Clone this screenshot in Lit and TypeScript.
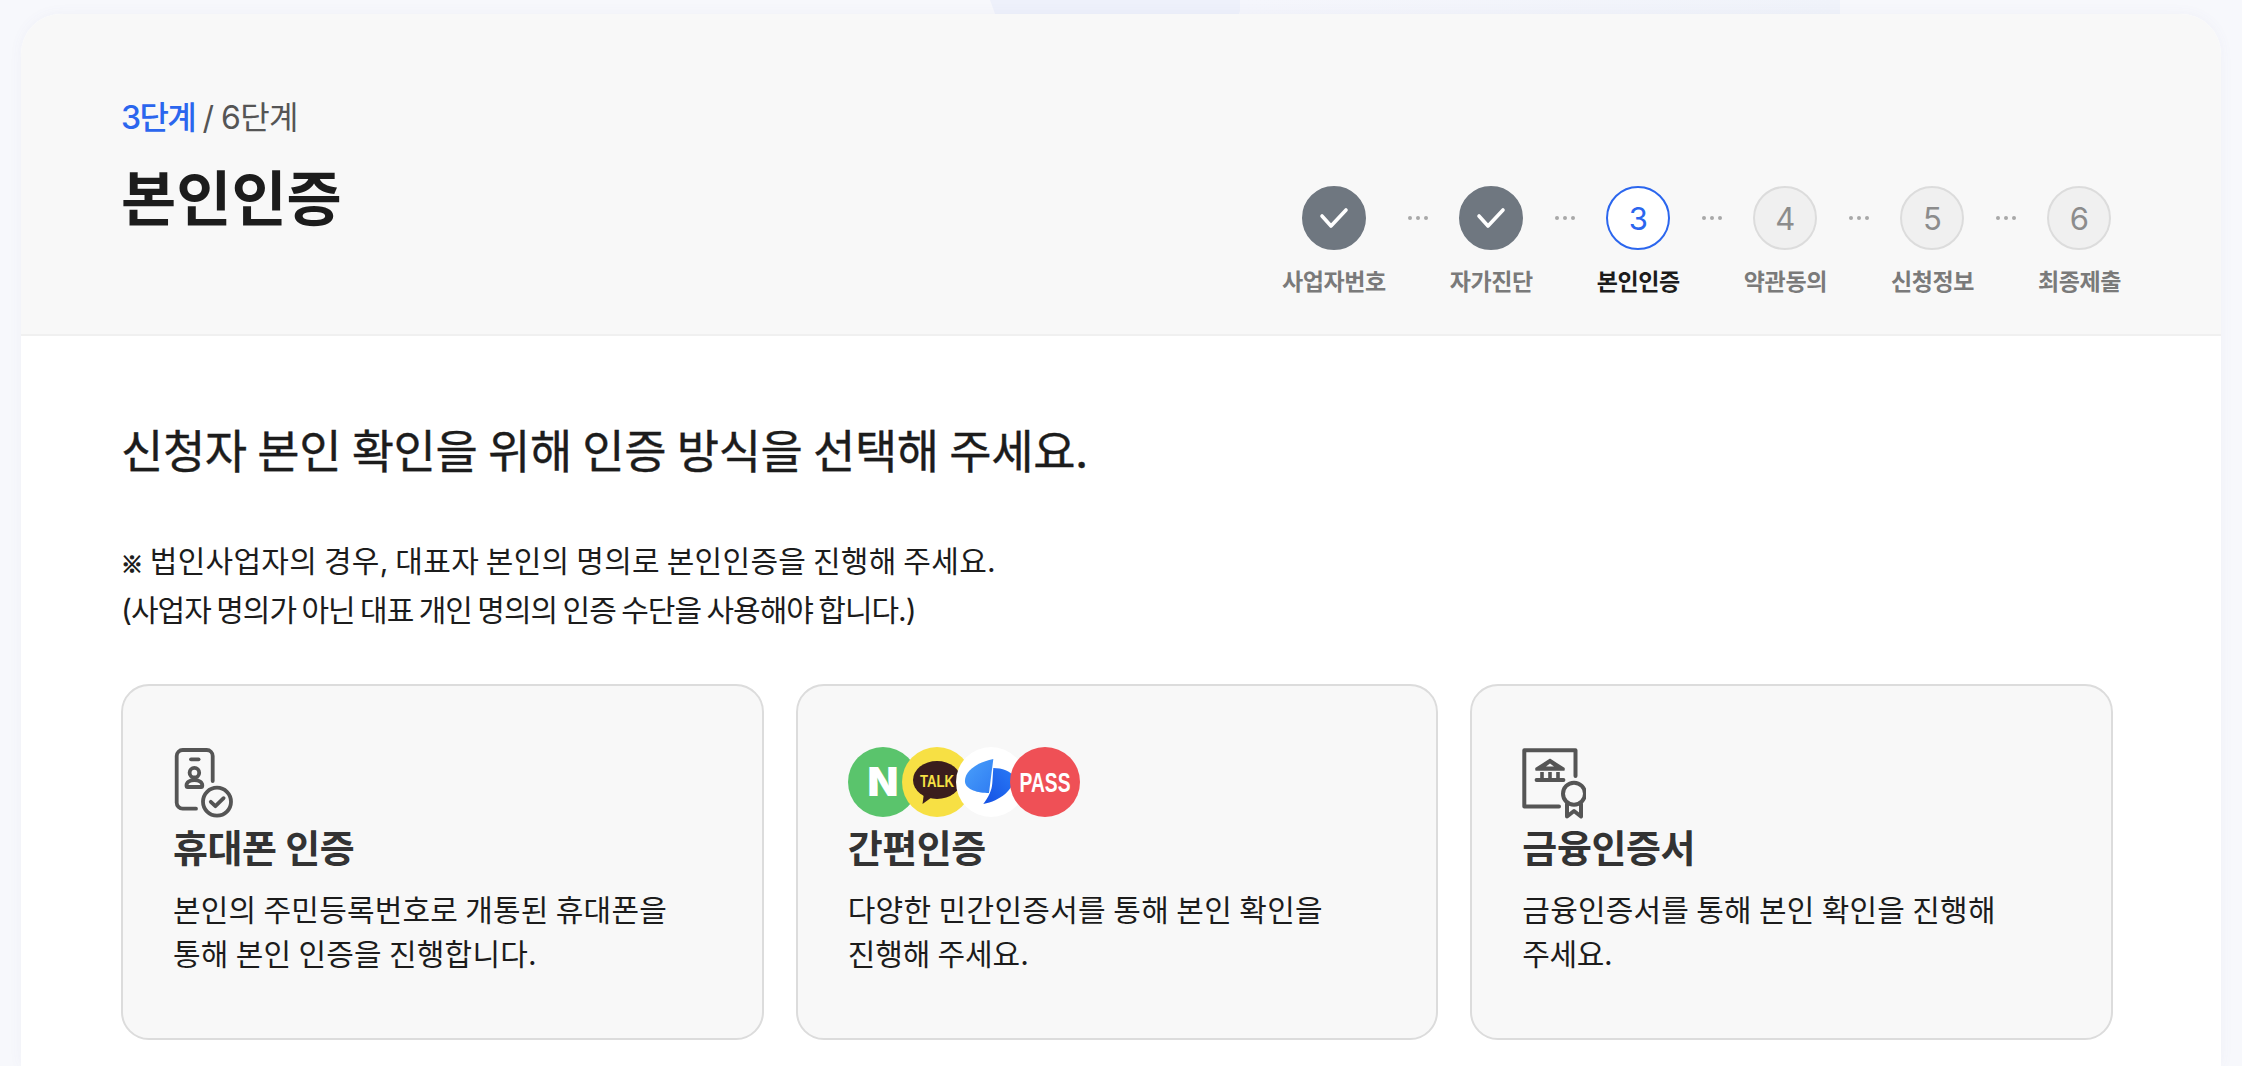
import { LitElement, html, css, svg } from "lit";
import { customElement } from "lit/decorators.js";

const STEPS = ["사업자번호", "자가진단", "본인인증", "약관동의", "신청정보", "최종제출"];
const CURRENT = 3;

const phoneIcon = svg`
  <svg class="icon" width="64" height="72" viewBox="0 0 64 72" fill="none" stroke="#555" stroke-width="3.8" stroke-linecap="round" stroke-linejoin="round">
    <path d="M39.7 34V9a6 6 0 0 0-6-6H9.700a6 6 0 0 0-6 6v46.700a6 6 0 0 0 6 6H23" />
    <path d="M18 12.300h7.600" />
    <circle cx="21.400" cy="25.700" r="4.800" />
    <path d="M14.700 40h13.400c1 0 1.200-.8 1.200-1.600 0-3.200-3.400-5.400-7.900-5.400s-7.900 2.200-7.900 5.400c0 .8.2 1.600 1.200 1.600z" />
    <circle cx="44" cy="54.700" r="14" />
    <path d="M37.800 54.800l4.600 4.400 8.200-8" />
  </svg>`;

const certIcon = svg`
  <svg class="icon" width="64" height="72" viewBox="0 0 64 72" fill="none" stroke="#555" stroke-width="4" stroke-linecap="round" stroke-linejoin="round">
    <path d="M53.500 29V3.300H2.300v56.200H37" />
    <path d="M28 12.500L14 21.400v1.600h28v-1.600z" fill="#555" stroke-width="1.500" />
    <path d="M28 16.600l-4 2.900h8z" fill="#f8f8f8" stroke="none" />
    <path d="M20 25v6M28 25v6M36 25v6" stroke-width="3.600" stroke-linecap="butt" />
    <path d="M14.500 33h27" stroke-width="3.800" />
    <circle cx="52" cy="46.700" r="11" />
    <path d="M45 57v12.500l7-5.500 7 5.500V57" />
  </svg>`;

const logos = html`
  <div class="logos">
    <svg width="70" height="70" viewBox="0 0 70 70">
      <circle cx="35" cy="35" r="35" fill="#5ac46c" />
      <text x="35" y="49" text-anchor="middle" class="logo-n">N</text>
    </svg>
    <svg width="70" height="70" viewBox="0 0 70 70">
      <circle cx="35" cy="35" r="35" fill="#f7e044" />
      <ellipse cx="35" cy="33" rx="24" ry="19" fill="#3a1d1d" />
      <path d="M22 46l-1.500 11 11-8z" fill="#3a1d1d" />
      <text x="35" y="39.500" text-anchor="middle" textLength="34" lengthAdjust="spacingAndGlyphs" class="logo-talk">TALK</text>
    </svg>
    <svg width="70" height="70" viewBox="0 0 70 70">
      <defs>
        <linearGradient id="leafA" x1="0" y1="0" x2="1" y2="1">
          <stop offset="0" stop-color="#4aa0fb" />
          <stop offset="1" stop-color="#2f7cf2" />
        </linearGradient>
        <linearGradient id="leafB" x1="1" y1="0" x2="0" y2="1">
          <stop offset="0" stop-color="#2a7bf6" />
          <stop offset="1" stop-color="#1450e4" />
        </linearGradient>
      </defs>
      <circle cx="35" cy="35" r="35" fill="#fff" />
      <path d="M37.300 12C18 16 8 26 9 35c1 8 13 11 24 11z" fill="url(#leafA)" />
      <path d="M37.300 21c9 0 17 3 21 9 0 12-14 24-31 27 5-7 8.500-13 9-21z" fill="url(#leafB)" />
    </svg>
    <svg width="70" height="70" viewBox="0 0 70 70">
      <circle cx="35" cy="35" r="35" fill="#ef5056" />
      <text x="35" y="45" text-anchor="middle" textLength="51" lengthAdjust="spacingAndGlyphs" class="logo-pass">PASS</text>
    </svg>
  </div>`;

const METHODS = [
  {
    icon: phoneIcon,
    title: "휴대폰 인증",
    lines: [
      { text: "본인의 주민등록번호로 개통된 휴대폰을", track: 0.2 },
      { text: "통해 본인 인증을 진행합니다.", track: 0.2 },
    ],
  },
  {
    icon: logos,
    title: "간편인증",
    lines: [
      { text: "다양한 민간인증서를 통해 본인 확인을", track: 0.3 },
      { text: "진행해 주세요.", track: 0 },
    ],
  },
  {
    icon: certIcon,
    title: "금융인증서",
    lines: [
      { text: "금융인증서를 통해 본인 확인을 진행해", track: 0.2 },
      { text: "주세요.", track: -0.4 },
    ],
  },
];

@customElement("app-root")
export class AppRoot extends LitElement {
  static styles = css`
    :host {
      display: block;
      height: 100vh;
      overflow: hidden;
      font-family: Inter, "Noto Sans CJK KR", "Noto Sans", sans-serif;
      color: #1c1c1c;
    }

    .page {
      position: relative;
      box-sizing: border-box;
      height: 100vh;
      padding: 14px 21px 0;
      background: #f7f8fc;
    }

    .blob {
      position: absolute;
      top: 0;
      height: 14px;
    }

    .blob.a {
      left: 990px;
      width: 254px;
      background: #eef1fb;
      clip-path: polygon(0 0, 100% 0, 98% 100%, 2% 100%);
    }

    .blob.b {
      left: 1240px;
      width: 600px;
      background: linear-gradient(90deg, #f5f6fc, #f0f3fa);
    }

    .panel {
      position: relative;
      height: 100%;
      background: #fff;
      border-radius: 40px 40px 0 0;
      box-shadow: 0 0 14px rgba(90, 100, 150, 0.05);
    }

    .head {
      box-sizing: border-box;
      height: 322px;
      padding: 0 100px;
      display: flex;
      justify-content: space-between;
      background: #f8f8f8;
      border-bottom: 2px solid #f0f0f0;
      border-radius: 40px 40px 0 0;
    }

    .count {
      margin: 82px 0 0;
      font-size: 32px;
      line-height: 44px;
      letter-spacing: -0.6px;
      word-spacing: -1px;
      color: #555;
    }

    .count b {
      font-weight: 500;
      letter-spacing: -1.6px;
      color: #2b66ee;
    }

    .title {
      margin: 16px 0 0;
      font-size: 60px;
      line-height: 86px;
      font-weight: 700;
    }

    .steps {
      display: flex;
      margin-top: 172px;
      align-self: flex-start;
    }

    .step {
      display: flex;
      flex-direction: column;
      align-items: center;
    }

    .circle {
      box-sizing: border-box;
      width: 64px;
      height: 64px;
      border-radius: 50%;
      display: flex;
      align-items: center;
      justify-content: center;
      font-size: 31px;
      background: #f0f0f0;
      border: 2px solid #dcdcdc;
      color: #8c8c8c;
    }

    .circle.done {
      background: #6f7780;
      border-color: #6f7780;
    }

    .circle.current {
      background: #fff;
      border-color: #2b66ee;
      color: #2b66ee;
    }

    .label {
      margin-top: 15px;
      font-size: 23px;
      line-height: 34px;
      font-weight: 700;
      letter-spacing: -0.4px;
      color: #7a7a7a;
    }

    .label.current {
      color: #1c1c1c;
    }

    .dots {
      width: 64px;
      height: 64px;
      display: flex;
      align-items: center;
      justify-content: center;
      gap: 4px;
    }

    .dots i {
      width: 4px;
      height: 4px;
      border-radius: 50%;
      background: #a8a8a8;
    }

    .body {
      padding: 0 100px;
    }

    .lead {
      margin: 0;
      padding-top: 81px;
      font-size: 46px;
      line-height: 68px;
      font-weight: 400;
      letter-spacing: -0.4px;
      word-spacing: -2px;
      -webkit-text-stroke: 0.4px #1c1c1c;
    }

    .note {
      margin: 52px 0 0;
      font-size: 30px;
      line-height: 48px;
      word-spacing: -2px;
    }

    .note .first {
      letter-spacing: 0.3px;
    }

    .note .second {
      letter-spacing: -1px;
    }

    .note .mark {
      font-family: "Noto Sans CJK KR", sans-serif;
      font-size: 22px;
      font-weight: 700;
      letter-spacing: 0;
      -webkit-text-stroke: 1px #1c1c1c;
    }

    .cards {
      margin-top: 50px;
      width: 1992px;
      display: grid;
      grid-template-columns: repeat(3, 1fr);
      gap: 32px;
    }

    .card {
      box-sizing: border-box;
      height: 356px;
      padding: 61px 50px 0;
      background: #f8f8f8;
      border: 2px solid #dcdcdc;
      border-radius: 28px;
    }

    .card-icon {
      height: 74px;
      display: flex;
    }

    .logos {
      display: flex;
    }

    .logos svg + svg {
      margin-left: -16px;
    }

    .logo-n {
      font: 900 40px Inter, sans-serif;
      fill: #fff;
    }

    .logo-talk {
      font: 800 17px "Liberation Sans", sans-serif;
      fill: #f7e044;
    }

    .logo-pass {
      font: 700 27px "Liberation Sans", sans-serif;
      fill: #fff;
    }

    .card h3 {
      margin: 0;
      font-size: 38px;
      line-height: 54px;
      font-weight: 700;
      letter-spacing: -0.4px;
      color: #333;
    }

    .card p {
      margin: 13px 0 0;
      font-size: 30px;
      line-height: 44px;
      word-spacing: -1.5px;
    }
  `;

  private renderStep(name: string, index: number) {
    const n = index + 1;
    const state = n < CURRENT ? "done" : n === CURRENT ? "current" : "";
    return html`
      ${index > 0 ? html`<div class="dots"><i></i><i></i><i></i></div>` : ""}
      <div class="step">
        <div class="circle ${state}">
          ${n < CURRENT
            ? html`<svg width="30" height="22" viewBox="0 0 30 22" fill="none" stroke="#fff" stroke-width="3.600" stroke-linecap="round" stroke-linejoin="round"><path d="M3 9l9 10L27 3" /></svg>`
            : n}
        </div>
        <div class="label ${state}">${name}</div>
      </div>
    `;
  }

  render() {
    return html`
      <div class="page">
        <div class="blob a"></div>
        <div class="blob b"></div>
        <div class="panel">
          <header class="head">
            <div>
              <p class="count"><b>3단계</b> / 6단계</p>
              <h1 class="title">본인인증</h1>
            </div>
            <div class="steps">${STEPS.map((s, i) => this.renderStep(s, i))}</div>
          </header>
          <section class="body">
            <h2 class="lead">신청자 본인 확인을 위해 인증 방식을 선택해 주세요.</h2>
            <p class="note">
              <span class="first"><span class="mark">※</span> 법인사업자의 경우, 대표자 본인의 명의로 본인인증을 진행해 주세요.</span><br />
              <span class="second">(사업자 명의가 아닌 대표 개인 명의의 인증 수단을 사용해야 합니다.)</span>
            </p>
            <div class="cards">
              ${METHODS.map(
                (m) => html`
                  <article class="card">
                    <div class="card-icon">${m.icon}</div>
                    <h3>${m.title}</h3>
                    <p>
                      ${m.lines.map(
                        (l, i) => html`${i > 0 ? html`<br />` : ""}<span style="letter-spacing: ${l.track}px">${l.text}</span>`
                      )}
                    </p>
                  </article>
                `
              )}
            </div>
          </section>
        </div>
      </div>
    `;
  }
}
